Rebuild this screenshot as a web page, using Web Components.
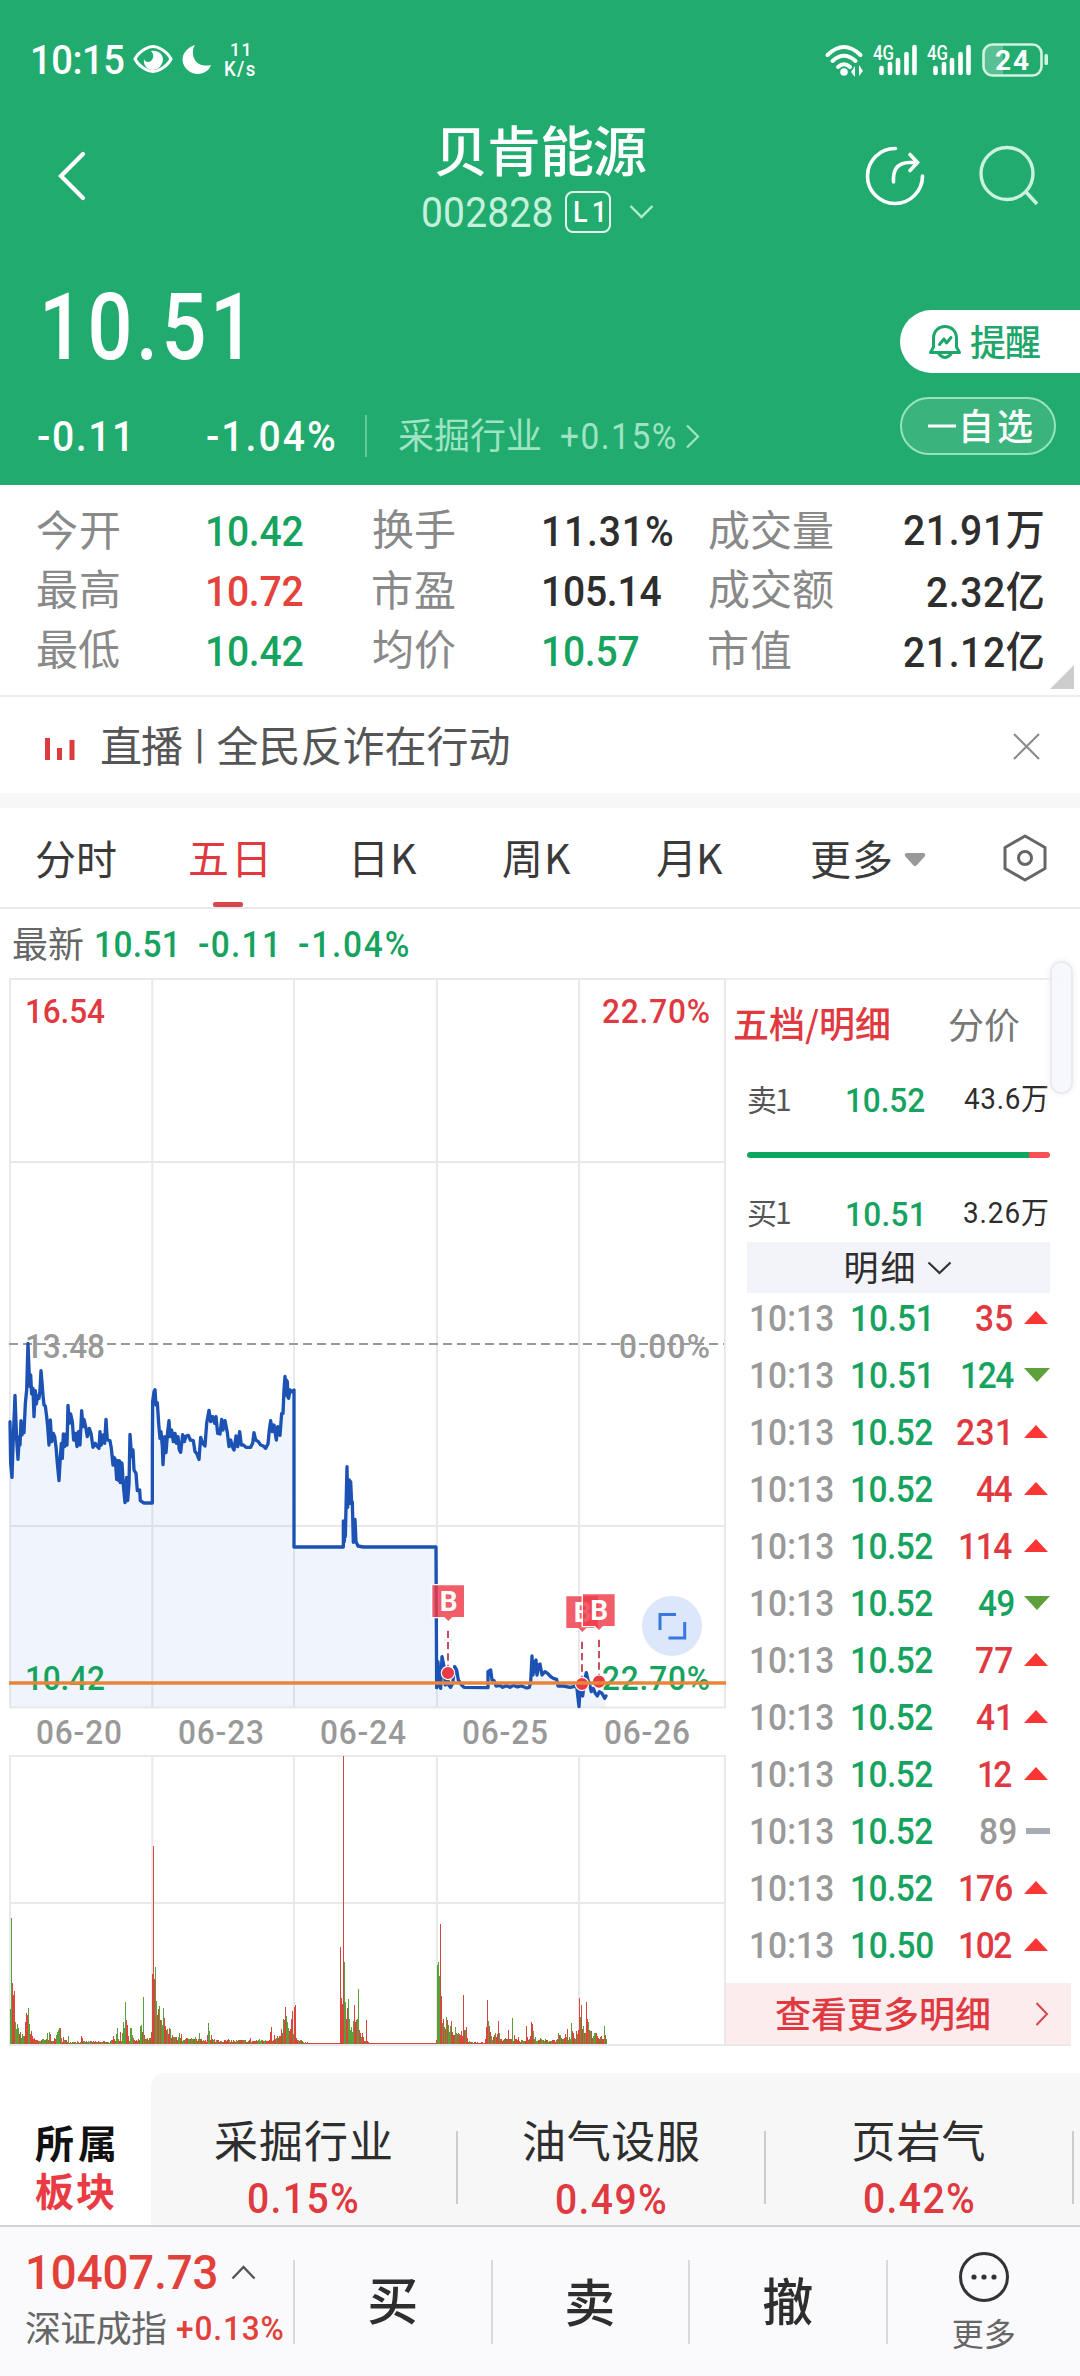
<!DOCTYPE html>
<html lang="zh-CN">
<head>
<meta charset="utf-8">
<title>贝肯能源 002828</title>
<style>
html,body{margin:0;padding:0;background:#fff}
body{width:1080px;height:2376px;overflow:hidden;font-family:Roboto,"Noto Sans CJK SC",sans-serif;color:#333}
</style>
</head>
<body>
<stock-app></stock-app>
<script>
const RED='#e0393f', GREEN='#16a35f';

/* Small helper: registers an element whose shadow root is filled from css + markup. */
function define(name, css, html){
  customElements.define(name, class extends HTMLElement{
    connectedCallback(){
      if(this.shadowRoot) return;
      const t=document.createElement('template');
      t.innerHTML='<style>:host{display:block;box-sizing:border-box}*{box-sizing:border-box}svg{display:block;flex:none;overflow:visible}'+css+'</style>'+(typeof html==='function'?html(this):html);
      this.attachShadow({mode:'open'}).appendChild(document.importNode(t.content,true));
    }
  });
}

/* Text whose box is its ink box. s = font size, w = ink width, b = weight, c = colour,
   x = horizontal scale of the glyphs (figures are slightly condensed by default). */
const pen=document.createElement('canvas').getContext('2d');
customElements.define('fit-text', class extends HTMLElement{
  connectedCallback(){
    if(this.shadowRoot) return;
    const text=this.textContent.trim(), s=+this.getAttribute('s')||36, c=this.getAttribute('c')||'inherit';
    const cjk=text.charCodeAt(0)>0x2e00;
    const b=this.getAttribute('b')||(cjk?'400':'500');
    const k=cjk?1:+this.getAttribute('x')||.93;
    const fam=cjk?'"Noto Sans CJK SC",sans-serif':'Roboto,"Noto Sans CJK SC",sans-serif';
    pen.font=b+' '+s+'px '+fam;
    const m=pen.measureText(text);
    const ink=m.actualBoundingBoxRight+m.actualBoundingBoxLeft, n=[...text].length;
    const w=+this.getAttribute('w')||ink*k;
    const ls=n>1?(w/k-ink)/(n-1):0;
    const up=m.actualBoundingBoxAscent, h=up+m.actualBoundingBoxDescent;
    const base=h/2+(m.fontBoundingBoxAscent-m.fontBoundingBoxDescent)/2;
    const r=this.attachShadow({mode:'open'});
    r.innerHTML=`<style>:host{display:flow-root;flex:none;width:${w}px;height:${h}px;color:${c}}
      span{display:block;width:${w/k}px;margin-top:${up-base}px;margin-left:${m.actualBoundingBoxLeft*k}px;font:${b} ${s}px/${h}px ${fam};letter-spacing:${ls}px;white-space:nowrap;transform:scaleX(${k});transform-origin:0 0}</style><span><slot></slot></span>`;
  }
});

define('signal-4g',':host{width:45px;height:46px}',
`<svg width="45" height="46" viewBox="0 -6 45 46"><text x="0" y="17" font-family="Roboto" font-weight="500" font-size="21" textLength="21" lengthAdjust="spacingAndGlyphs" fill="#fff">4G</text>
<g stroke="#fff" stroke-width="4.6" stroke-linecap="round"><path d="M8.500 25V30M17 21V30M25 17V30M33.500 11V30M41.500 4V30"/></g></svg>`);

define('status-bar',`:host{height:119px;display:flex;align-items:center;padding-left:33px;color:#fff}
.net{display:flex;flex-direction:column;align-items:center;gap:5px;margin-left:12px;width:30px}`,
`<fit-text s="41" w="91">10:15</fit-text>
<svg style="margin-left:9px" width="40" height="30" viewBox="0 0 40 30"><path d="M2 14Q5 8 12 4Q20 -1 28 4Q35 8 38 14Q35 20 28 24Q20 29 12 24Q5 20 2 14Z" fill="none" stroke="#fff" stroke-width="3"/><path d="M18 6C25 5 30 9 30 15C29 21 25 25 20 25C14 25 10 20 11 14C12 17 15 18 18 16C21 13 21 9 18 6Z" fill="#fff"/></svg>
<svg style="margin-left:9px" width="31" height="31" viewBox="0 0 31 31"><path d="M13 1C4 4 -1 11 1 19C4 28 13 32 21 29C26 27 28 24 29 21C21 23 14 20 12 14C10 9 11 4 13 1Z" fill="#fff"/></svg>
<div class="net"><fit-text s="19" w="18">11</fit-text><fit-text s="20" w="30">K/s</fit-text></div>
<svg style="margin-left:570px" width="40" height="32" viewBox="0 0 40 32"><g fill="none" stroke="#fff" stroke-width="4" stroke-linecap="round"><path d="M2.500 11Q19 -5 35.500 11M7.500 17Q19 6.500 30.500 17M13 23Q19 17.500 25 23"/></g><circle cx="19" cy="28" r="3.800" fill="#fff"/><path d="M26 28l4-6v11zM38 27l-4-6v11z" fill="#fff"/></svg>
<signal-4g style="margin-left:8px"></signal-4g><signal-4g style="margin-left:9px"></signal-4g>
<svg style="margin-left:10px" width="68" height="34" viewBox="0 0 68 34"><path d="M10 2H21V32H10Q2 32 2 24V10Q2 2 10 2Z" fill="#fff" opacity=".25"/><rect x="1.500" y="1.500" width="58" height="31" rx="9" fill="none" stroke="#d3f3e2" stroke-width="2.600"/><rect x="62.500" y="11" width="3.500" height="11" rx="1.500" fill="#d3f3e2"/><text x="13" y="27" font-family="Roboto" font-weight="700" font-size="28" textLength="34" fill="#fff">24</text></svg>`);

define('title-bar',`:host{height:114px;display:flex;align-items:center;padding-left:57px;color:#fff}
.mid{align-self:flex-start;display:flex;flex-direction:column;padding-top:6px;margin-left:336px;width:231px}
.code{display:flex;align-items:center;margin-top:14px;height:42px}
.l1{width:46px;height:42px;border:2.500px solid #e3f7ee;border-radius:8px;display:flex;align-items:center;justify-content:center;margin-left:13px}`,
`<svg width="30" height="52" viewBox="0 0 30 52"><path d="M26 4L4 26L26 48" fill="none" stroke="#fff" stroke-width="4.200" stroke-linecap="round"/></svg>
<div class="mid"><fit-text style="margin-left:13px" s="54" w="210" b="500">贝肯能源</fit-text>
<div class="code"><fit-text s="42" w="129" b="400" c="#c5f0dc">002828</fit-text><span class="l1"><fit-text s="29" w="27">L1</fit-text></span>
<svg style="margin-left:18px" width="25" height="16" viewBox="0 0 25 16"><path d="M1.500 2L12.500 13L23.500 2" fill="none" stroke="#b5ebd1" stroke-width="2.400"/></svg></div></div>
<svg style="margin-left:210px" width="62" height="62" viewBox="0 0 62 62"><g fill="none" stroke="#fff" stroke-width="3.600" stroke-linecap="round"><path d="M31.500 3.500A27.500 27.500 0 1 0 58.500 31"/><path d="M29.500 37V33Q30 18 45 17.500H51M46 9.500L53.500 17.500L46 25.500"/></g></svg>
<svg style="margin-left:53px" width="62" height="62" viewBox="0 0 62 62"><g fill="none" stroke="#c9f2df" stroke-width="3.400"><circle cx="28" cy="28.500" r="26"/><path d="M47 47L58 59" stroke-width="3.600"/></g></svg>`);

define('price-head',`:host{height:252px;display:flex;color:#fff}
.left{width:900px;padding:59px 0 0 45px}
.row{display:flex;align-items:center;height:42px;margin:55px 0 0 -7px}
.row i{width:2px;height:42px;background:#64c99b;margin-left:30px}
.right{width:180px;padding-top:77px}
.remind{height:63px;background:#fff;border-radius:32px 0 0 32px;display:flex;align-items:center;padding-left:28px;color:#1fa76b}
.fav{height:58px;width:156px;margin-top:24px;border:2px solid #98e2bf;background:#3ab37d;border-radius:29px;display:flex;align-items:center;padding-left:26px}`,
`<div class="left"><fit-text s="92" w="195" x=".86">10.51</fit-text>
<div class="row"><fit-text s="42" w="89">-0.11</fit-text><fit-text style="margin-left:80px" s="42" w="128">-1.04%</fit-text><i></i>
<fit-text style="margin-left:32px" s="36" w="141" c="#9ee3c4">采掘行业</fit-text><fit-text style="margin-left:21px" s="36" w="114" b="400" c="#9ee3c4">+0.15%</fit-text>
<svg style="margin-left:10px" width="15" height="25" viewBox="0 0 15 25"><path d="M2 1.500L13 12.500L2 23.500" fill="none" stroke="#9ee3c4" stroke-width="2.300"/></svg></div></div>
<div class="right"><div class="remind"><svg width="34" height="36" viewBox="0 0 34 36"><g fill="none" stroke="#1fa76b" stroke-width="3" stroke-linejoin="round" stroke-linecap="round"><path d="M2.500 28.500H31.500L28.500 23V14.500C28.500 7 23.500 2.500 17 2.500S5.500 7 5.500 14.500V23Z"/><path d="M11 30Q17 37 23 30M11.500 20.500L16 15L18.500 19L23 13.500"/></g></svg><fit-text style="margin-left:8px" s="36" w="70" b="500">提醒</fit-text></div>
<div class="fav"><svg width="28" height="4" viewBox="0 0 28 4"><path d="M0 2H28" stroke="#fff" stroke-width="3"/></svg><fit-text style="margin-left:7px" s="36" w="69" b="500">自选</fit-text></div></div>`);

define('quote-stats',`:host{height:212px;padding:16px 0 0 37px;border-bottom:2px solid #ececec;display:grid;grid-template-columns:171px 165px 171px 165px 124px 210px;grid-template-rows:60px 60px 60px;align-items:center;background:#fff;align-content:start}
.e{justify-self:end}.k{margin-top:-3px}
svg{grid-column:6;justify-self:end;margin:-16px -31px 0 0}`,
()=>{const d=[
['今开',82,'10.42',95,GREEN],['换手',82,'11.31%',129,'#2e2e2e'],['成交量',124,'21.91万',139,'#2e2e2e'],
['最高',82,'10.72',95,'#e5423c'],['市盈',82,'105.14',117,'#2e2e2e'],['成交额',124,'2.32亿',116,'#2e2e2e'],
['最低',82,'10.42',95,GREEN],['均价',82,'10.57',95,GREEN],['市值',82,'21.12亿',139,'#2e2e2e']];
return d.map((r,i)=>`<fit-text class="k" s="42" w="${r[1]}" c="#898989">${r[0]}</fit-text><fit-text class="${i%3==2?'e':''}" s="42" w="${r[3]}" c="${r[4]}">${r[2]}</fit-text>`).join('')
+`<svg width="24" height="24" viewBox="0 0 24 24"><path d="M24 0V24H0Z" fill="#ccc"/></svg>`});

define('live-banner',`:host{height:111px;border-bottom:15px solid #f7f7f7;display:flex;align-items:center;padding:2px 0 0 44px;background:#fff}`,
`<svg style="margin-top:6px" width="32" height="22" viewBox="0 0 32 22"><path d="M3.500 0V22M15.500 10V22M28 2V22" stroke="#dc3b40" stroke-width="5"/></svg>
<fit-text style="margin-left:25px" s="42" w="81" c="#555">直播</fit-text><fit-text style="margin-left:16px;margin-right:16px" s="40" b="500" w="3.5" c="#555">|</fit-text><fit-text s="42" w="291" c="#555">全民反诈在行动</fit-text>
<svg style="margin-left:504px" width="27" height="27" viewBox="0 0 27 27"><path d="M1 1L26 26M26 1L1 26" stroke="#8c8c8c" stroke-width="2.200"/></svg>`);

define('chart-tabs',`:host{height:101px;border-bottom:2px solid #e9e9e9;display:flex;align-items:center;padding:4px 0 0 36px;color:#3a3a3a;background:#fff}
.on{display:flex;flex-direction:column;align-items:center;justify-content:center;height:95px;position:relative;color:${RED}}
.on i{position:absolute;bottom:0;width:30px;height:5px;border-radius:2px;background:#d8454b}`,
`<fit-text s="41" w="80">分时</fit-text><div class="on" style="margin-left:74px"><fit-text s="41" w="76">五日</fit-text><i></i></div>
<fit-text style="margin-left:89px" s="41" w="62">日K</fit-text><fit-text style="margin-left:86px" s="41" w="68">周K</fit-text><fit-text style="margin-left:86px" s="41" w="66">月K</fit-text><fit-text style="margin-left:88px" s="41" w="80">更多</fit-text>
<svg style="margin-left:13px" width="22" height="14" viewBox="0 0 22 14"><path d="M2 0H20Q22 1 21 3L13 12Q11 14 9 12L1 3Q0 1 2 0Z" fill="#999"/></svg>
<svg style="margin-left:76px;margin-top:-4px" width="46" height="48" viewBox="0 0 46 48"><g fill="none" stroke="#666" stroke-width="3" stroke-linejoin="round"><path d="M23 2L43 13.500V34.500L23 46L3 34.500V13.500Z"/><circle cx="23" cy="24" r="6.500"/></g></svg>`);

define('latest-line',`:host{height:69px;display:flex;align-items:center;padding-left:13px;color:${GREEN};background:#fff}`,
`<fit-text s="36" w="70" c="#666">最新</fit-text><fit-text style="margin-left:13px" s="36" w="79">10.51</fit-text><fit-text style="margin-left:24px" s="36" w="76">-0.11</fit-text><fit-text style="margin-left:24px" s="36" w="109">-1.04%</fit-text>`);

/* Five-day price and volume chart. Price points are in thirds of a pixel. */
const P1='30,395 32,520 36,562 40,440 45,316 50,450 54,508 58,440 60,465 63,392 66,435 70,400 72,428 76,340 80,300 82,230 84,160 88,262 90,290 92,255 95,312 99,295 102,380 106,302 109,342 113,318 117,325 120,300 123,242 127,290 129,316 132,345 136,348 140,380 143,410 147,465 151,390 155,455 160,430 164,440 168,470 172,520 177,572 181,500 184,460 187,505 190,432 194,470 198,432 201,465 204,346 208,400 212,372 217,395 221,450 226,430 231,470 235,425 240,465 245,362 249,410 252,388 257,410 262,440 268,415 273,430 279,472 286,460 292,470 297,475 300,425 304,465 310,435 314,460 318,388 322,450 330,452 334,475 339,525 342,502 346,508 350,568 353,512 356,572 358,512 361,578 364,518 366,520 370,585 375,638 380,562 383,632 387,580 390,433 395,500 399,480 402,540 408,550 412,602 419,600 421,632 432,639 457,639 457,480 458,335 462,305 465,299 468,345 472,338 476,400 480,445 483,425 487,470 489,524 494,440 498,488 503,425 507,392 510,440 515,420 520,455 525,430 529,460 534,440 538,480 542,487 548,434 553,455 558,438 565,436 571,450 580,452 585,485 590,490 597,508 602,442 608,460 615,468 620,400 627,361 632,395 638,380 644,400 648,380 653,430 660,432 665,388 669,420 675,392 682,428 687,470 692,450 697,470 702,480 708,438 713,470 719,425 724,465 730,465 738,472 752,472 758,460 762,428 767,450 775,455 782,465 790,468 797,475 804,462 808,420 812,392 817,425 822,405 829,450 833,410 840,436 845,370 849,370 852,300 855,259 857,315 859,270 862,275 864,322 866,325 870,300 875,305 882,300 882,771 1030,771 1030,693 1033,755 1035,700 1036,740 1041,530 1043,652 1045,570 1048,570 1050,640 1052,575 1055,640 1057,636 1060,757 1065,688 1068,755 1074,768 1090,771 1308,771'
.split(' ').map(p=>p.split(',').map(Number));
const P2='470,983 474,905 478,975 482,985 486,890 492,920 496,975 500,925 506,975 512,982 518,970 524,920 530,930 535,960 545,975 552,982 624,983 624,935 632,930 636,960 642,962 648,978 660,976 668,982 680,977 690,982 700,976 712,981 725,978 740,984 748,982 752,968 756,888 759,945 762,905 765,935 768,900 771,945 776,915 780,912 786,945 795,935 803,940 812,950 820,955 830,958 834,978 850,978 870,982 890,978 897,1040 900,985 908,1008 914,960 919,938 924,960 928,970 934,995 940,985 946,1000 952,1008 958,995 966,1000 974,1015 978,1008'
.split(' ').map(p=>p.split(',').map(Number)).map(([x,y])=>[x+840,y+210]);
const V='31,837g 34,564g 37,759r 40,795r 43,783r 46,876g 49,897g 52,882g 55,894g 58,912r 76,876r 79,849r 82,855r 85,834g 88,882g 91,912r 94,903r 97,918r 142,909g 148,906g 151,912r 169,915g 172,906g 175,900g 178,895g 181,894r 184,924g 190,921r 205,918g 244,918r 247,924r 340,918r 349,912g 352,894g 361,905r 367,909g 370,876g 373,894g 376,816g 379,870r 382,885r 385,918r 391,894g 394,894g 397,915g 421,888g 424,885g 427,906r 430,801g 433,915r 457,732r 460,348r 463,747r 466,711g 469,813g 472,855r 475,837r 478,828g 481,870r 484,870g 487,885g 490,834g 493,865r 496,887r 499,900r 502,897g 505,912r 508,895r 511,897g 517,915r 520,921g 538,909g 544,912r 586,921g 598,909g 622,915r 625,879g 628,903g 634,915r 751,924r 811,905r 814,891r 823,915r 844,897r 847,908r 850,868g 853,870r 856,831r 859,858g 862,875g 865,894g 868,903r 871,897r 874,867r 877,843r 880,912g 883,831r 886,825r 889,924r 892,930r 1021,651r 1024,804r 1027,822r 1030,78r 1033,696g 1036,816g 1039,867r 1042,834r 1045,807g 1048,867g 1051,900g 1054,891g 1057,905g 1060,873g 1063,825r 1066,876r 1069,870r 1072,867g 1075,777g 1078,900r 1081,908r 1084,920g 1087,910r 1090,921r 1099,870r 1312,705g 1315,696g 1318,738g 1321,582r 1324,798r 1327,880g 1330,867r 1333,892g 1336,897r 1339,861g 1342,870r 1345,885g 1348,905g 1351,888g 1354,873r 1357,905r 1360,915r 1363,915r 1366,891g 1369,908g 1372,911r 1375,910g 1378,912r 1384,903r 1387,918r 1390,795r 1393,900r 1396,900g 1399,891r 1402,925r 1459,891r 1462,810r 1465,873g 1468,888r 1471,905r 1474,918g 1483,915r 1486,909g 1492,912r 1495,873r 1498,909g 1525,900r 1537,864g 1543,915r 1555,921r 1579,888r 1591,918r 1594,876r 1597,882r 1600,903g 1606,921g 1675,909g 1678,915r 1681,915g 1696,912r 1702,897r 1714,879g 1717,903r 1720,909r 1729,903r 1735,900r 1738,804r 1741,861g 1744,825r 1747,897r 1750,888g 1753,909r 1756,909g 1759,816r 1762,867r 1765,876g 1768,900r 1771,903g 1774,903r 1777,924r 1786,909g 1789,909r 1792,918r 1795,924r 1813,888g 1816,915r 1819,927g';
/* Envelope of the small bars: x and height. */
const ENV=[[31,44],[58,30],[76,18],[98,18],[110,12],[165,14],[190,12],[210,7],[330,7],[345,14],[450,14],[457,70],[500,34],[530,17],[600,12],[640,12],[700,10],[800,11],[845,24],[885,30],[893,12],[912,6],[930,3],[1018,3],[1024,60],[1085,25],[1100,8],[1112,3],[1306,3],[1315,60],[1360,28],[1396,22],[1406,8],[1428,4],[1453,4],[1462,40],[1478,17],[1560,12],[1590,17],[1640,11],[1690,14],[1730,25],[1765,32],[1819,15]];
function volume(){
  const spikes={}; V.split(' ').forEach(t=>{const m=t.match(/(\d+),(\d+)(.)/);spikes[m[1]]=[+m[2],m[3]]});
  let seed=7,g='',r='',q='';const rnd=()=>(seed=(seed*16807)%2147483647)/2147483647;
  for(let x=31;x<=1819;x+=3){
    let top,c;const a=rnd(),b=rnd();
    if(spikes[x])[top,c]=spikes[x];
    else{let i=0;while(i<ENV.length-2&&ENV[i+1][0]<x)i++;
      const [x0,h0]=ENV[i],[x1,h1]=ENV[i+1];const h=h0+(h1-h0)*(x-x0)/(x1-x0);
      top=941-Math.max(3,Math.round(h*(.55+.75*a)/3)*3);
      c=h<5||(x>1100&&x<1312)?'r':(b<.4?'r':b<.7?'g':'q');}
    const d=`M${x-1.5} 941V${top}h3V941z`;
    if(c==='q')q+=d;else if(c==='g')g+=d;else r+=d;
  }
  return `<path d="${g}" fill="#5aa03a"/><path d="${r}" fill="#d8463b"/><path d="${q}" fill="#9a6c2b"/>`;
}
function flag(x,y,cx,dotY){return `<g><path d="M${x} ${y}h99v99h-36l-13 13l-13-13h-37z" fill="#ee3b48" fill-opacity=".82" stroke="#fff" stroke-width="4"/><text x="${x+24}" y="${y+79}" font-family="Roboto" font-weight="700" font-size="84" fill="#fff">B</text><path d="M${cx} ${y+138}V${dotY-18}" stroke="#c4505c" stroke-width="6" stroke-dasharray="22 12"/><circle cx="${cx}" cy="${dotY}" r="20" fill="#ea3a44" stroke="#fff" stroke-width="3.500"/></g>`}
define('five-day-chart',':host{width:726px;height:1068px}',()=>{
  const pts=[...P1,...P2], line=pts.map(p=>p.join(' ')).join('L');
  const T=(x,y,w,t,c)=>`<text transform="translate(${x} ${y}) scale(.93 1)" textLength="${w/.93}" fill="${c}">${t}</text>`;
  const F='<g font-family="Roboto" font-size="34" font-weight="500">';
  return `<svg width="726" height="1068" viewBox="0 978 726 1068">
<g stroke="#e9e9ea" stroke-width="2" fill="none"><path d="M9 979H726M10 979V1707M152.300 979V1707M294 979V1707M437 979V1707M579 979V1707M725 979V1707M9 1162H725M9 1526H725M9 1707.500H726"/>
<path d="M9 1756H726M10 1756V2045M152.300 1756V2045M294 1756V2045M437 1756V2045M579 1756V2045M725 1756V2045M9 1903H725M9 2045H726"/></g>
${F}${T(25,1023,80,'16.54',RED)}${T(602,1023,108,'22.70%',RED)}${T(25,1358,80,'13.48','#999')}${T(619,1358,91,'0.00%','#999')}</g>
<path d="M9 1344H724" stroke="#999" stroke-width="2" stroke-dasharray="9 5"/>
<g transform="translate(0 1290) scale(.33333)"><path d="M30 1250L${line}L1818 1250Z" fill="#3b7ee8" fill-opacity=".08"/><path d="M${line}" fill="none" stroke="#1b52b4" stroke-width="10" stroke-linejoin="round" stroke-linecap="round"/></g>
<g transform="translate(280 1360) scale(.33333)">${flag(455,674,504,939)}${flag(857,707,906,972)}${flag(907,701,957,965)}</g>
${F}${T(25,1690,80,'10.42',GREEN)}${T(602,1690,108,'22.70%',GREEN)}</g>
<path d="M9 1683H726" stroke="#e98439" stroke-width="3.400"/>
<circle cx="672" cy="1626" r="30" fill="#dde7fb"/><path d="M676 1614.500H660V1630M668.500 1638H684.700V1622" fill="none" stroke="#3678e0" stroke-width="3"/>
${F}${['06-20','06-23','06-24','06-25','06-26'].map((t,i)=>T(36+i*142,1744,86,t,'#999')).join('')}</g>
<g transform="translate(0 1730) scale(.33333)" shape-rendering="crispEdges">${volume()}</g></svg>`});

define('level-row',':host{display:flex;align-items:center;height:57px;padding:0 23px 0 22px}.p{margin-left:57px}.q{margin-left:auto}',
e=>{const d=k=>e.getAttribute(k);return `<fit-text s="30" w="42" c="#555">${d('k')}</fit-text><fit-text class="p" s="34" w="${d('pw')}" c="${GREEN}">${d('p')}</fit-text><fit-text class="q" s="30" w="84" c="#2e2e2e" b="400">${d('q')}</fit-text>`});

define('tick-row',':host{display:flex;align-items:center;height:57px;padding:0 23px 0 25px}.p{margin-left:19px}.q{margin-left:auto}',
e=>{const p=e.getAttribute('p'),q=e.getAttribute('q'),d=e.getAttribute('d');
const c=d==='u'?RED:d==='d'?GREEN:'#999';
const w=q.length===3?(q.endsWith('1')?51:52):(q.endsWith('1')?32:q[0]==='1'?33:36);
const gap=(d==='u'?12:10)+(q.endsWith('1')?4:0);
const mark=d==='u'?'<svg width="24" height="13" viewBox="0 0 24 13"><path d="M12 0L24 13H0Z" fill="#fb3533"/></svg>':
d==='d'?'<svg style="margin-right:-2px" width="26" height="14" viewBox="0 0 26 14"><path d="M0 0H26L13 14Z" fill="#5ea03b"/></svg>':
'<svg style="margin-right:-2px" width="24" height="6" viewBox="0 0 24 6"><path d="M0 0H24V6H0Z" fill="#a8adb5"/></svg>';
return `<fit-text s="36" w="82" c="#999">10:13</fit-text><fit-text class="p" s="36" w="${p.endsWith('1')?77:81}" c="${GREEN}">${p}</fit-text><fit-text class="q" s="36" w="${w}" c="${c}" style="margin-right:${gap}px">${q}</fit-text>${mark}`});

define('order-panel',`:host{width:345px;height:1068px;border-top:2px solid #ececec;border-bottom:2px solid #e9e9e9;position:relative}
.tabs{height:91px;display:flex;align-items:center;padding-left:8px;gap:60px}
.ratio{height:6px;margin:24px 21px 27px;border-radius:3px;background:linear-gradient(90deg,#0ea75f 93%,#f84f52 93%)}
.detail{height:51px;margin:0 21px;background:#f3f4f9;display:flex;align-items:center;justify-content:center;gap:13px}
.ticks{margin-top:-4px}
.more{height:61px;margin-top:10px;background:#fdeced;display:flex;align-items:center;padding-left:50px}
.thumb{position:absolute;left:326px;top:-17px;width:19px;height:129px;border-radius:10px;background:#f6f7fde8;box-shadow:0 0 0 2px #ebebef,0 0 6px 3px #f1f1f3}`,
()=>`<div class="tabs"><fit-text s="36" w="155" b="500" c="${RED}">五档/明细</fit-text><fit-text s="36" w="70" c="#777">分价</fit-text></div>
<level-row k="卖1" p="10.52" pw="78" q="43.6万"></level-row><div class="ratio"></div><level-row k="买1" p="10.51" pw="74" q="3.26万"></level-row>
<div class="detail"><fit-text s="35" w="68" c="#2e2e2e">明细</fit-text><svg width="25" height="14" viewBox="0 0 25 14"><path d="M1.500 1.500L12.500 12L23.500 1.500" fill="none" stroke="#333" stroke-width="2.200"/></svg></div>
<div class="ticks">${'10.51,35,u 10.51,124,d 10.52,231,u 10.52,44,u 10.52,114,u 10.52,49,d 10.52,77,u 10.52,41,u 10.52,12,u 10.52,89,f 10.52,176,u 10.50,102,u'.split(' ').map(t=>{const a=t.split(',');return `<tick-row p="${a[0]}" q="${a[1]}" d="${a[2]}"></tick-row>`}).join('')}</div>
<div class="more"><fit-text s="36" w="213" b="500" c="${RED}">查看更多明细</fit-text><svg style="margin-left:46px" width="14" height="24" viewBox="0 0 14 24"><path d="M1.500 1L12 12L1.500 23" fill="none" stroke="#d8454b" stroke-width="2"/></svg></div>
<div class="thumb"></div>`);

define('sector-strip',`:host{height:152px;margin-top:27px;display:flex;background:#fff}
.head{width:151px;padding:52px 0 0 35px;display:flex;flex-direction:column;gap:9px}
.list{flex:1;display:flex;background:#f7f7f8;border-top-left-radius:14px;overflow:hidden}
.it{flex:none;width:308px;height:152px;display:flex;flex-direction:column;align-items:center;padding-top:47px;gap:21px}
.it:first-child{width:306px;padding-right:2px}
i{flex:none;width:2px;height:73px;margin:58px -1px 0;background:#ccc}`,
()=>`<div class="head"><fit-text s="39" w="79" b="700" c="#111">所属</fit-text><fit-text s="39" w="79" b="700" c="#ea3a43">板块</fit-text></div>
<div class="list">${[['采掘行业',176,'0.15%'],['油气设服',176,'0.49%'],['页岩气',131,'0.42%']].map(a=>`<div class="it"><fit-text s="44" w="${a[1]}" c="#2e2e2e">${a[0]}</fit-text><fit-text s="42" w="109" c="${RED}">${a[2]}</fit-text></div><i></i>`).join('')}</div>`);

define('trade-bar',`:host{height:151px;border-top:2px solid #d3d3d5;background:#fafafc;display:flex}
.idx{width:293px;padding:27px 0 0 26px}
.a{display:flex;align-items:center;padding-left:3px;height:36px}
.b{display:flex;align-items:center;margin-top:20px;height:35px}
i{flex:none;width:2px;height:84px;background:#d9d9dc;margin-top:33px}
.btn{width:195.500px;height:149px;display:flex;justify-content:center;padding-top:52px;color:#2e2e2e}
.more{flex:1;display:flex;flex-direction:column;align-items:center;padding-top:24px;gap:15px}`,
`<div class="idx"><div class="a"><fit-text s="49" w="188" c="#e2403a">10407.73</fit-text><svg style="margin-left:14px" width="25" height="15" viewBox="0 0 25 15"><path d="M1.500 13.500L12.500 2L23.500 13.500" fill="none" stroke="#555" stroke-width="2.400"/></svg></div>
<div class="b"><fit-text s="36" w="140" c="#666">深证成指</fit-text><fit-text style="margin-left:11px" s="34" w="106" c="#e2403a">+0.13%</fit-text></div></div>
<i></i><div class="btn"><fit-text s="51" b="500">买</fit-text></div><i></i><div class="btn"><fit-text style="margin-top:-1px" s="51" b="500">卖</fit-text></div><i></i><div class="btn"><fit-text style="margin-top:-2px" s="51" b="500">撤</fit-text></div><i></i>
<div class="more"><svg width="52" height="52" viewBox="0 0 52 52"><circle cx="26" cy="26" r="23.500" fill="none" stroke="#333" stroke-width="3"/><g fill="#333"><circle cx="16" cy="26" r="2.600"/><circle cx="26" cy="26" r="2.600"/><circle cx="36" cy="26" r="2.600"/></g></svg><fit-text s="32" w="62" c="#666">更多</fit-text></div>`);

define('stock-app',':host{width:1080px;height:2376px;background:#fff;overflow:hidden}header{background:#21ab6f}.body{display:flex}',
`<header><status-bar></status-bar><title-bar></title-bar><price-head></price-head></header>
<quote-stats></quote-stats><live-banner></live-banner><chart-tabs></chart-tabs><latest-line></latest-line>
<div class="body"><five-day-chart></five-day-chart><order-panel></order-panel></div>
<sector-strip></sector-strip><trade-bar></trade-bar>`);
</script>
</body>
</html>
